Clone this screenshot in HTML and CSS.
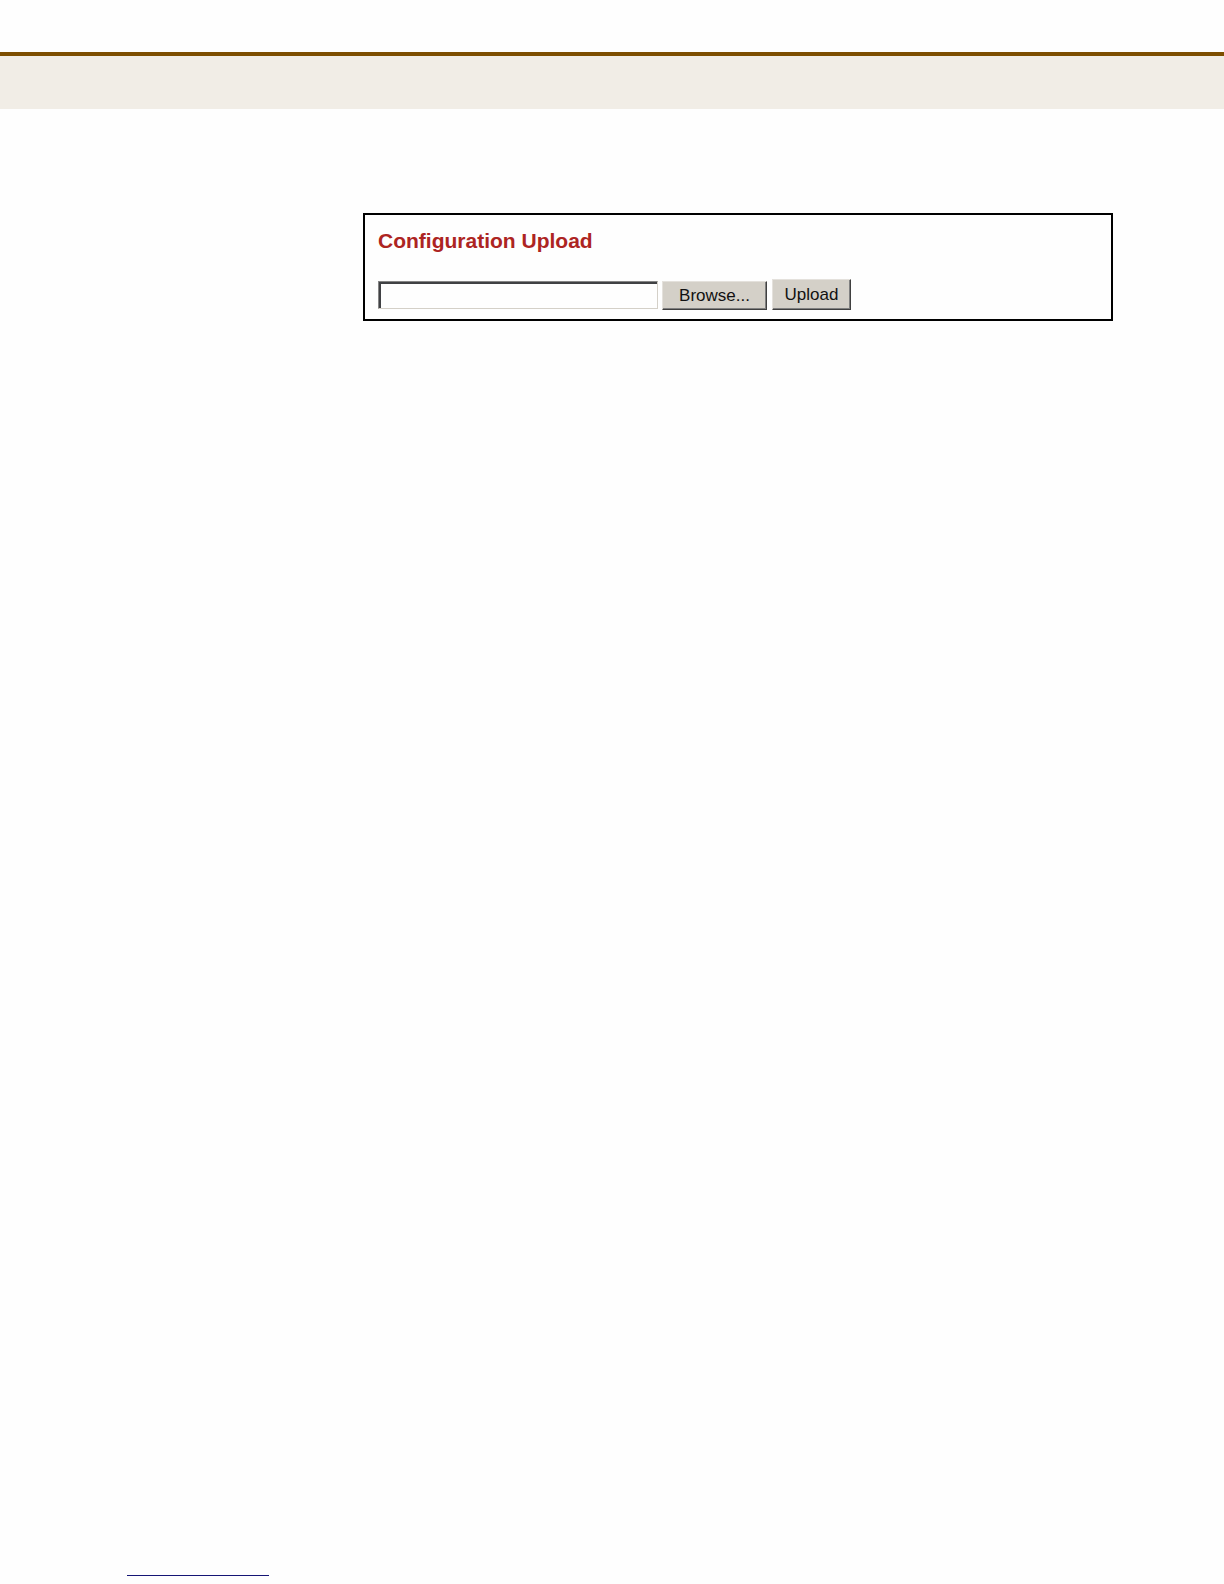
FILE: index.html
```html
<!DOCTYPE html>
<html lang="en">
<head>
<meta charset="utf-8">
<meta name="viewport" content="width=device-width, initial-scale=1">
<title>Configuration Upload</title>
<link rel="stylesheet" href="styles.css">
</head>
<body>
<header class="banner"></header>
<main class="content">
  <form class="panel">
    <h1 class="title" id="upload-title">Configuration Upload</h1>
    <div class="controls">
      <input class="path" type="text" aria-labelledby="upload-title">
      <button class="button browse" type="button">Browse...</button>
      <button class="button upload" type="submit">Upload</button>
    </div>
  </form>
</main>
<footer class="footer"><hr class="rule"></footer>
</body>
</html>
```

FILE: styles.css
```css
* {
  box-sizing: border-box;
}

body {
  display: flex;
  flex-direction: column;
  min-height: 100vh;
  margin: 0;
  background: #fefefe;
  font-family: "Liberation Sans", Arial, sans-serif;
}

.banner {
  height: 57px;
  margin-top: 52px;
  border-top: 4px solid #7d4e00;
  background: #f1ede6;
}

.content {
  flex: 1;
  padding: 104px 111px 0 363px;
}

.panel {
  padding: 14px 13px 9px;
  border: 2px solid #000;
  background: #fefefe;
}

.title {
  margin: 0 0 26px;
  color: #ad2422;
  font-size: 21px;
  line-height: 24px;
}

.controls {
  display: flex;
  align-items: flex-end;
}

.path {
  flex: 0 1 280px;
  min-width: 0;
  height: 28px;
  margin: 0 4px 1px 0;
  padding: 0 4px;
  border: 1px solid;
  border-color: #858585 #d4d0c8 #d4d0c8 #858585;
  background: #fefefe;
  box-shadow: inset 2px 2px #404144;
  font: inherit;
  font-size: 17px;
}

.button {
  padding: 0;
  border: 1px solid;
  border-color: #e4e1dc #404040 #404040 #e4e1dc;
  background: #d4d0c8;
  box-shadow: inset -1px -1px #808080;
  color: #111;
  font: inherit;
  font-size: 17px;
  line-height: 20px;
}

.browse {
  width: 105px;
  height: 29px;
  margin-right: 5px;
}

.upload {
  width: 79px;
  height: 31px;
}

.footer {
  padding: 0 127px 8px;
}

.rule {
  width: 142px;
  margin: 0;
  border: 0;
  border-top: 1px solid #151575;
}
```
